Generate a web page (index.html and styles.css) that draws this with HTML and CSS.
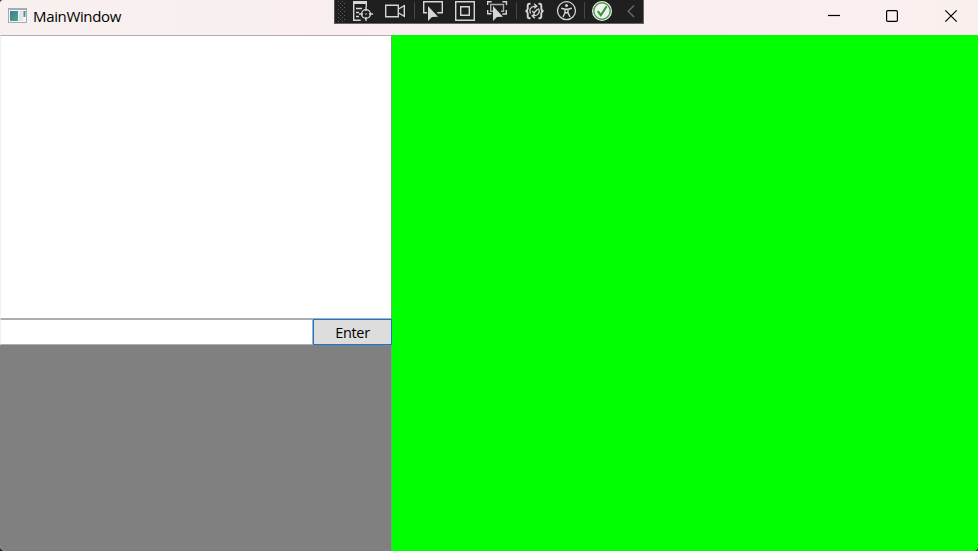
FILE: index.html
```html
<!DOCTYPE html>
<html lang="en">
<head>
<meta charset="utf-8">
<title>MainWindow</title>
<link rel="stylesheet" href="styles.css">
</head>
<body>
<div class="window">
  <header class="titlebar">
    <svg class="app-icon" width="20" height="16" viewBox="0 0 20 16">
      <defs><linearGradient id="pane" x2="1" y2="1"><stop stop-color="#3c78a0"/><stop offset="1" stop-color="#52aa82"/></linearGradient></defs>
      <rect x=".5" y=".5" width="18" height="14" fill="#f4f6f8" stroke="#a5a9b2"/>
      <path d="M1 1.5h17M1 14.5h18" stroke="#a5abb8"/>
      <rect x="2" y="3" width="8" height="10" fill="url(#pane)"/>
      <rect x="11" y="3" width="4" height="10" fill="#e3e6e8"/>
      <rect x="15.5" y="3" width="2" height="6" fill="url(#pane)"/>
    </svg>
    <span class="title">MainWindow</span>
    <div class="controls">
      <svg width="59" height="35" viewBox="0 0 59 35"><path d="M18 15.5h12"/></svg>
      <svg width="59" height="35" viewBox="0 0 59 35"><rect x="17.6" y="10.6" width="10.8" height="10.8" rx="1.2"/></svg>
      <svg width="59" height="35" viewBox="0 0 59 35"><path d="M17.3 10.3l11.4 11.4M28.7 10.3L17.3 21.7"/></svg>
    </div>
  </header>
  <main class="content">
    <section class="left">
      <div class="output"></div>
      <div class="entry-row">
        <input class="entry" type="text" aria-label="Entry">
        <button class="enter">Enter</button>
      </div>
      <div class="panel"></div>
    </section>
    <section class="canvas"></section>
  </main>
  <div class="debugbar">
    <svg width="310" height="24" viewBox="334 0 310 24" fill="none" stroke="#d6d6d6" stroke-width="1.4">
      <defs><pattern id="grip" x="338" y="1" width="4" height="4" patternUnits="userSpaceOnUse"><path d="M0 0h1v1h-1zM2 2h1v1h-1z" fill="#5c5c5c" stroke="none"/></pattern></defs>
      <rect x="338" y="1" width="7" height="21" fill="url(#grip)" stroke="none"/>
      <path d="M414.5 2v17M516.5 2v17M584.5 2v17" stroke="#464646" stroke-width="1"/>
      <path d="M353 1h14v3h-14z" fill="#d6d6d6" stroke="none"/>
      <path d="M353.7 3v17.3h7M366.3 3v4M356 8.5h6M356 12.5h3M356 16.5h3"/>
      <circle cx="366" cy="14" r="4.4"/><path d="M366 7v4M366 17v4M359 14h4M369 14h4"/><circle cx="366" cy="14" r=".8" fill="#d6d6d6" stroke="none"/>
      <path d="M385.7 5.2h12.6v11.6h-12.6zM398.5 9l5.8-3.3v10.6l-5.8-3.3"/>
      <path d="M427 12.7h-3.3V1.7h18.6v11h-5"/>
      <path d="M428 6v15l4-4 6-.3z" fill="#d6d6d6" stroke="none"/>
      <path d="M455.7 1.7h18.6v18.6h-18.6zM460.7 6.7h8.6v8.6h-8.6z"/>
      <path d="M487.7 5V1.7h4M502.5 1.7h4V5M506.3 10v4h-4M491.5 13.7h-3.8V10"/>
      <path d="M493 11.3h-2.3V4.5h12.8v6.8h-2.5" stroke="#aaa"/>
      <path d="M493 6v15l4-4 6-.3z" fill="#d6d6d6" stroke="none"/>
      <path d="M530.5 3.7h-1q-1.8 0-1.8 2v3q0 1.8-2 2.3q2 .5 2 2.3v3q0 2 1.8 2h1M538.5 3.7h1q1.8 0 1.8 2v3q0 1.8 2 2.3q-2 .5-2 2.3v3q0 2-1.8 2h-1" stroke-width="1.9"/>
      <path d="M530.6 13.6a4.7 4.7 0 0 1 3.2-7.3h3M538.4 8.4a4.7 4.7 0 0 1-3.2 7.3h-3M534.2 3.8l2.6 2.5-2.6 2M534.8 18.2l-2.6-2.5 2.6-2M532.2 11l1.8 2 3.6-4" stroke-width="1.3"/>
      <circle cx="566.5" cy="10.7" r="9" stroke-width="1.3"/><circle cx="566.5" cy="5.5" r="1.5" fill="#d6d6d6" stroke="none"/>
      <path d="M561.2 8.2l3.8 1h3l3.8-1M565 9.2v3.5l-2 4.3M568 9.2v3.5l2 4.3M565 12.7h3"/>
      <circle cx="602" cy="11" r="10" fill="#f0f0f0" stroke="none"/><circle cx="602" cy="11" r="8.2" stroke="#4a994a"/>
      <path d="M597.8 11.2l3 4 5.8-8.8" stroke="#319431" stroke-width="2"/>
      <path d="M634 5.5l-5.8 5.8 5.8 5.8" stroke="#6a6a6a" stroke-width="1.4"/>
    </svg>
  </div>
</div>
</body>
</html>
```
FILE: styles.css
```css
* { box-sizing: border-box; }
body { margin: 0; background: #202020; font-family: "Open Sans", "Noto Sans", sans-serif; }
.window {
  position: relative;
  display: flex;
  flex-direction: column;
  width: 978px;
  height: 551px;
  overflow: hidden;
  border-radius: 3px 0 4px 5px;
}
.titlebar {
  display: flex;
  align-items: center;
  height: 35px;
  padding-left: 8px;
  background: linear-gradient(90deg, #f8f0ee, #f9eef1 50%, #f9f0ee);
}
.app-icon { margin-top: -3px; }
.title { margin: -4px 0 0 5px; font-size: 15px; letter-spacing: -0.35px; color: #000; }
.controls { display: flex; margin-left: auto; margin-right: -9px; }
.controls svg { display: block; fill: none; stroke: #000; stroke-width: 1.2; }
.content { display: flex; flex: 1; }
.left {
  position: relative;
  z-index: 1;
  display: flex;
  flex-direction: column;
  width: 391px;
  background: #fff;
}
.output {
  height: 284px;
  border: solid #abadb3;
  border-width: 1px 0 1px 1px;
  border-left-color: #f0f1f3;
}
.entry-row { display: flex; height: 26px; margin-right: -1px; }
.entry {
  flex: 1;
  min-width: 0;
  padding: 0;
  border: 1px solid #abadb3;
  border-left-color: #f0f1f3;
  background: #fff;
}
.enter {
  width: 79px;
  padding: 0;
  border: 1px solid #1478d2;
  background: #ddd;
  color: #000;
  font-family: inherit;
  font-size: 14.5px;
  letter-spacing: -0.3px;
}
.panel { flex: 1; background: #808080; }
.canvas { flex: 1; border-left: 1px solid #60b860; background: #0f0; }
.debugbar {
  position: absolute;
  left: 334px;
  top: 0;
  z-index: 2;
  width: 310px;
  height: 24px;
  background: #1f1f1f;
  box-shadow: inset 1px 0 #555, inset -1px -1px #666;
}
.debugbar svg { display: block; }
```
